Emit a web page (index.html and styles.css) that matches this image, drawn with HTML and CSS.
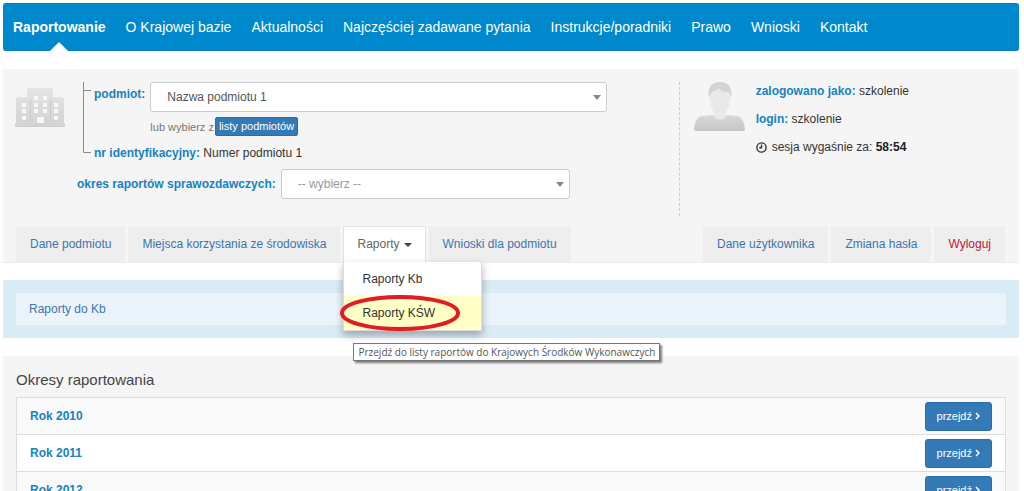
FILE: index.html
```html
<!DOCTYPE html>
<html lang="pl">
<head>
<meta charset="utf-8">
<title>Krajowa baza – Raportowanie</title>
<link rel="stylesheet" href="styles.css">
</head>
<body>
<nav class="topnav">
  <a class="active" href="#">Raportowanie</a>
  <a href="#">O Krajowej bazie</a>
  <a href="#">Aktualności</a>
  <a href="#">Najczęściej zadawane pytania</a>
  <a href="#">Instrukcje/poradniki</a>
  <a href="#">Prawo</a>
  <a href="#">Wnioski</a>
  <a href="#">Kontakt</a>
</nav>

<section class="panel context">
  <div class="context-body">
    <div class="entity">
      <svg class="building" viewBox="0 0 50 40" aria-hidden="true">
        <defs><linearGradient id="wall" x1="0" y1="0" x2="0" y2="1"><stop offset="0" stop-color="#e5e5e5"/><stop offset="1" stop-color="#d2d2d2"/></linearGradient></defs>
        <path fill="url(#wall)" d="M12 9V1h1V0h24v1h1v8h10v1h1v25h1v4H0v-4h1V10h1V9z"/>
        <path fill="#f8f8f8" d="M19 8h4v4h-4zM28 8h4v4h-4zM19 15h4v4h-4zM28 15h4v4h-4zM19 21h4v4h-4zM28 21h4v4h-4zM7 15h4v4H7zM7 21h4v4H7zM7 28h4v4H7zM39 15h4v4h-4zM39 21h4v4h-4zM39 28h4v4h-4zM22 29h7v6h-7z"/>
        <path fill="none" stroke="#cccccc" d="M1 38.500h48M15.500 11v24M35.500 11v24"/>
      </svg>
      <div class="fields">
        <div class="tree">
          <svg class="bracket" viewBox="0 0 8 71" aria-hidden="true"><path d="M.5 0v70.500H8M.5 8.500H8" fill="none" stroke="#8c8c8c"/></svg>
          <div class="row first">
            <label for="entity">podmiot:</label>
            <div class="pick">
              <div class="select wide"><select id="entity"><option>Nazwa podmiotu 1</option></select></div>
              <div class="alt">lub wybierz z <button type="button">listy podmiotów</button></div>
            </div>
          </div>
          <div class="ident"><b>nr identyfikacyjny:</b> Numer podmiotu 1</div>
        </div>
        <div class="row">
          <label for="period">okres raportów sprawozdawczych:</label>
          <div class="select medium muted"><select id="period"><option>-- wybierz --</option></select></div>
        </div>
      </div>
    </div>
    <div class="user">
      <svg class="avatar" viewBox="0 0 51 50" aria-hidden="true">
        <defs><linearGradient id="coat" x1="0" y1="0" x2="0" y2="1"><stop offset="0" stop-color="#d8d8d8"/><stop offset="1" stop-color="#c6c6c6"/></linearGradient></defs>
        <path fill="url(#coat)" d="M0 47c1-8 3-12 8-13l10-1h15l10 1c5 1 7 5 8 13 0 1-1 2-2 2H2c-1 0-2-1-2-2z"/>
        <path fill="#e9e9e9" d="M16 14c0-8 4-12 10-12s10 4 10 12c0 8-1 12-4 16v4c-2 5-10 5-12 0v-4c-3-4-4-8-4-16z"/>
        <path fill="#d3d3d3" d="M15 16C13 5 18 0 26 0s13 5 11 16l-2-6c-5 0-8-1-10-4-2 3-7 3-8 5z"/>
      </svg>
      <div class="session">
        <div><b>zalogowano jako:</b> szkolenie</div>
        <div><b>login:</b> szkolenie</div>
        <div class="timer"><svg viewBox="0 0 11 11" aria-hidden="true"><circle cx="5.500" cy="5.500" r="4.600"/><path d="M5.500 2.500v3.300H3.300"/></svg><span>sesja wygaśnie za: <strong>58:54</strong></span></div>
      </div>
    </div>
  </div>
  <div class="tabs">
    <a href="#">Dane podmiotu</a>
    <a href="#">Miejsca korzystania ze środowiska</a>
    <div class="dropdown">
      <a class="open" href="#">Raporty<i class="caret"></i></a>
      <div class="menu">
        <a href="#">Raporty Kb</a>
        <a class="hover" href="#">Raporty KŚW</a>
        <svg class="ring" viewBox="0 0 120 36" aria-hidden="true"><ellipse cx="60" cy="18" rx="58" ry="16"/></svg>
        <div class="tip" role="tooltip">Przejdź do listy raportów do Krajowych Środków Wykonawczych</div>
      </div>
    </div>
    <a href="#">Wnioski dla podmiotu</a>
    <a class="push" href="#">Dane użytkownika</a>
    <a href="#">Zmiana hasła</a>
    <a class="logout" href="#">Wyloguj</a>
  </div>
</section>

<section class="crumbs"><div><a href="#">Raporty do Kb</a></div></section>

<section class="panel periods">
  <h1>Okresy raportowania</h1>
  <table>
    <tr><td><a href="#">Rok 2010</a></td><td><button type="button">przejdź <svg viewBox="0 0 5 8" aria-hidden="true"><path d="M1 1l3 3-3 3"/></svg></button></td></tr>
    <tr><td><a href="#">Rok 2011</a></td><td><button type="button">przejdź <svg viewBox="0 0 5 8" aria-hidden="true"><path d="M1 1l3 3-3 3"/></svg></button></td></tr>
    <tr><td><a href="#">Rok 2012</a></td><td><button type="button">przejdź <svg viewBox="0 0 5 8" aria-hidden="true"><path d="M1 1l3 3-3 3"/></svg></button></td></tr>
  </table>
</section>
</body>
</html>
```
FILE: styles.css
```css
* { box-sizing: border-box; }
html { height: 100%; overflow: hidden; }
body {
  margin: 0;
  padding: 3px 5px 0 3px;
  height: 100%;
  overflow: hidden;
  display: flex;
  flex-direction: column;
  gap: 18px;
  background: #fff;
  color: #333;
  font: 12px/16px "Liberation Sans", Arial, sans-serif;
}
body > * { flex-shrink: 0; }
a { color: #3d74ad; text-decoration: none; }
b { color: #1782c0; }
svg { display: block; flex: none; }
button, select { font-family: inherit; }

.topnav {
  display: flex;
  gap: 20px;
  padding: 0 10px;
  background: #0088cc;
  border: 1px solid #087fbb;
  border-width: 1px 0;
  border-radius: 3px;
}
.topnav a { position: relative; color: #fff; font-size: 14px; line-height: 46px; }
.topnav .active { font-weight: bold; }
.topnav .active::after {
  content: "";
  position: absolute;
  left: 50%;
  bottom: -1px;
  margin-left: -9px;
  border: 9px solid transparent;
  border-top: 0;
  border-bottom-color: #fff;
}

.panel { background: #f5f5f5; }
.context { border-bottom: 1px solid #ececec; }
.context-body { display: flex; padding: 13px 12px 10px; }
.entity { flex: 0 0 67%; display: flex; border-right: 1px dashed #ccc; padding-bottom: 17px; }
.user { flex: 1; display: flex; gap: 11px; padding-left: 14px; }
.building { width: 50px; height: 40px; margin-top: 6px; }
.fields { flex: 1; padding-left: 12px; }
.tree { position: relative; padding-left: 17px; }
.bracket { position: absolute; left: 6px; top: 0; width: 8px; height: 71px; }
.row { display: flex; align-items: center; gap: 5px; }
.row.first { align-items: flex-start; }
label { color: #1782c0; font-weight: bold; white-space: nowrap; line-height: 24px; }
.pick { flex: 1; }
.select { position: relative; }
.wide { max-width: 457px; }
.medium { flex: 0 1 289px; }
.select::after {
  content: "";
  position: absolute;
  right: 6px;
  top: 13px;
  border: 4px solid transparent;
  border-top: 5px solid #888;
  border-bottom: 0;
}
select {
  display: block;
  width: 100%;
  height: 30px;
  appearance: none;
  padding: 0 20px 0 16px;
  color: #555;
  font-size: 12px;
  background: #fff;
  border: 1px solid #ccc;
  border-radius: 3px;
}
.muted select { color: #999; }
.alt { display: flex; align-items: center; gap: 1px; padding-top: 5px; color: #777; font-size: 11px; }
.alt button {
  padding: 0 3px;
  font-size: 11px;
  line-height: 17px;
  color: #fff;
  background: #337ab7;
  border: 1px solid #2e6da4;
  border-radius: 2px;
}
.ident { padding: 9px 0 8px; }

.session { display: flex; flex-direction: column; gap: 12px; padding-top: 1px; }
.avatar { width: 51px; height: 50px; }
.timer { display: flex; align-items: center; gap: 5px; }
.timer svg { width: 11px; height: 11px; fill: none; stroke: #333; stroke-width: 1.4; }
strong { color: #222; }

.tabs { display: flex; gap: 3px; padding: 0 14px 0 13px; }
.tabs > a, .open { display: block; padding: 0 14px; line-height: 36px; background: #eee; white-space: nowrap; }
.tabs .push { margin-left: auto; }
.tabs .logout { color: #c01735; }
.dropdown { position: relative; }
.tabs .open { background: #fff; color: #666; border: 1px solid #e2e2e2; border-width: 1px 1px 0; padding: 0 13px; line-height: 35px; }
.caret { display: inline-block; margin-left: 4px; vertical-align: middle; border: 4px solid transparent; border-top-color: #444; border-bottom: 0; }
.menu {
  position: absolute;
  z-index: 2;
  top: 100%;
  left: 0;
  width: 139px;
  background: #fff;
  border: 1px solid #ddd;
  border-top: 0;
  box-shadow: 0 4px 8px rgba(0, 0, 0, .3);
}
.menu a { display: block; padding: 0 18px; line-height: 34px; color: #333; }
.menu .hover { background: #ffffc6; }
.ring { position: absolute; left: -4px; top: 33px; width: 120px; height: 36px; fill: none; stroke: #e31b23; stroke-width: 4; }
.tip {
  position: absolute;
  left: 9px;
  top: 81px;
  padding: 0 4px;
  font: 10px/16px "Open Sans", "Noto Sans", sans-serif;
  color: #555;
  white-space: nowrap;
  background: #fff;
  border: 1px solid #777;
  box-shadow: 2px 2px 2px rgba(0, 0, 0, .5);
}

.crumbs { padding: 13px; background: #d9ebf4; }
.crumbs div { padding: 0 13px; line-height: 32px; background: #ebf4fb; border-radius: 2px; }
.context + .crumbs { margin-top: -1px; }

.periods { padding: 15px 13px; }
h1 { margin: 0 0 8px; font-size: 15px; line-height: 18px; font-weight: normal; color: #444; }
table { width: 100%; border-collapse: collapse; background: #fff; }
tr { border: 1px solid #ddd; }
tr:nth-child(odd) { background: #f9f9f9; }
td { padding: 3px 13px; height: 37px; vertical-align: middle; }
td a { color: #1782c0; font-weight: bold; }
td button {
  display: flex;
  align-items: center;
  gap: 3px;
  margin-left: auto;
  padding: 0 11px;
  color: #fff;
  font-size: 11px;
  line-height: 27px;
  background: #337ab7;
  border: 1px solid #2e6da4;
  border-radius: 3px;
}
td svg { width: 5px; height: 8px; fill: none; stroke: #fff; stroke-width: 1.5; }
```
